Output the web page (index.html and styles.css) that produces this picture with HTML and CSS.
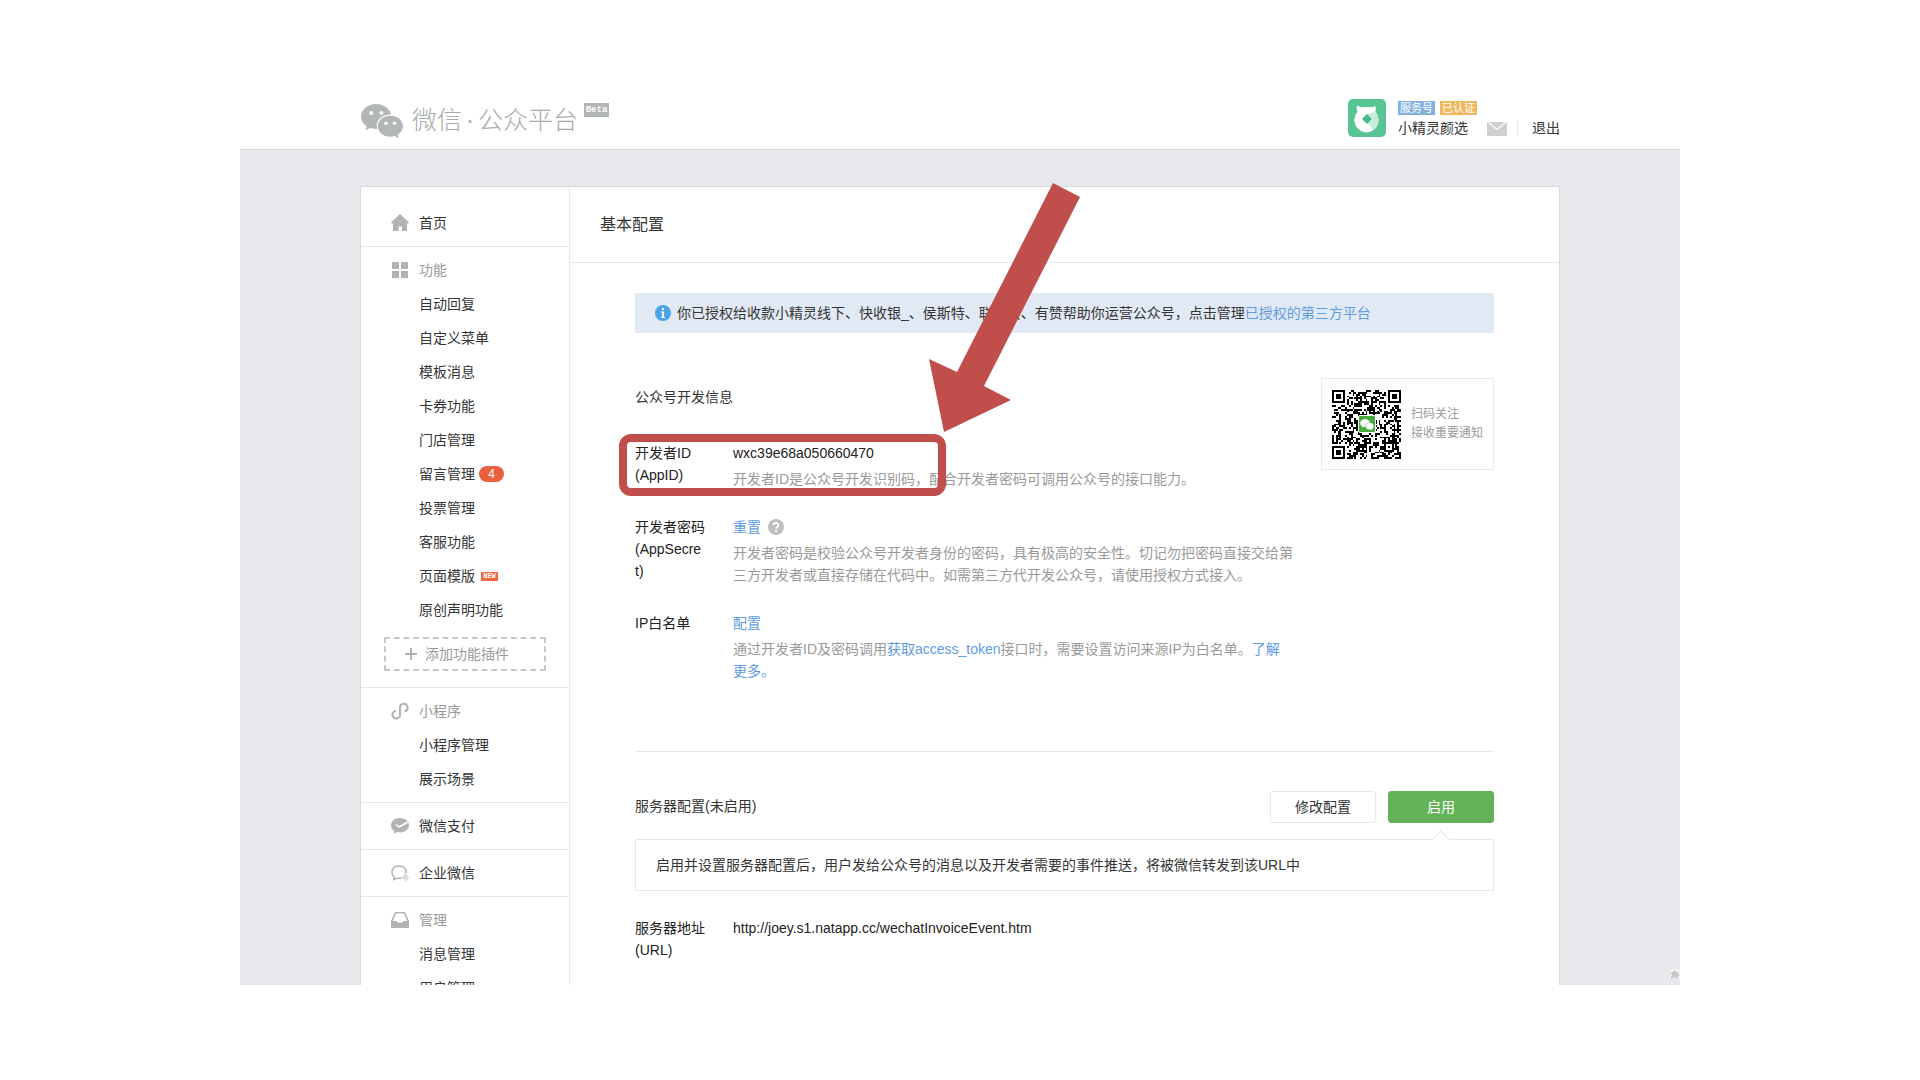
FILE: index.html
```html
<!DOCTYPE html>
<html lang="zh-CN">
<head>
<meta charset="utf-8">
<meta name="viewport" content="width=device-width, initial-scale=1">
<title>微信公众平台 - 基本配置</title>
<link rel="stylesheet" href="styles.css">
</head>
<body>
<svg class="defs" aria-hidden="true">
  <symbol id="wechat" viewBox="0 0 42 34">
    <path d="M15 0C6.700 0 0 5.600 0 12.600c0 4 2.200 7.500 5.600 9.800L4.300 26.600l5-2.500c1.800.5 3.600.8 5.700.8h1.200a11 11 0 0 1-.5-3.200c0-6.200 6-11.200 13.300-11.200h1.200C28.600 4.400 22.400 0 15 0z"/>
    <path d="M42 22.200c0-5.800-5.700-10.500-12.700-10.500s-12.600 4.700-12.600 10.500 5.600 10.500 12.600 10.500c1.600 0 3-.2 4.400-.6l4.300 2.100-1.200-3.600c3.200-1.900 5.200-5 5.200-8.400z"/>
    <g class="eye"><circle cx="10.300" cy="9" r="2"/><circle cx="20.500" cy="9" r="2"/><circle cx="25" cy="19.300" r="1.700"/><circle cx="33.500" cy="19.300" r="1.700"/></g>
  </symbol>
</svg>
<div class="stage">
  <header class="header">
    <div class="wrap header-row">
      <a class="logo" href="#">
        <svg class="logo-mark"><use href="#wechat"/></svg>
        <span class="logo-text">微信<span class="dot">·</span>公众平台</span>
        <span class="beta">Beta</span>
      </a>
      <div class="account">
        <svg class="avatar" viewBox="0 0 38 38">
          <rect width="38" height="38" rx="5" fill="#58c594"/>
          <path d="M9 6.500c3 1.800 5.500 2.200 7 1.500h6c2 .6 4.500 0 5-1.500 1.200 2.500.8 4.500.3 6A12 12.500 0 1 1 9.500 12.500C8.500 10.500 8.500 8.500 9 6.500z" fill="#fff"/>
          <path d="M27 13c5 5 5 13-1 17.500L19 24.500l6-4.500-6-5z" fill="#c6ecdb"/>
          <path d="M19 15l5 5-5 5-5-5z" fill="#46b889"/>
        </svg>
        <div class="who">
          <div class="tags"><span class="tag tag-blue">服务号</span><span class="tag tag-gold">已认证</span></div>
          <div class="who-row">
            <a href="#">小精灵颜选</a>
            <svg class="mail" viewBox="0 0 20 14"><rect width="20" height="14" fill="#cfcfcf"/><path d="M1 0l9 7.500L19 0" fill="none" stroke="#fff" stroke-width="1.200"/></svg>
            <a class="exit" href="#">退出</a>
          </div>
        </div>
      </div>
    </div>
  </header>

  <div class="wrap panel">
    <nav class="side">
      <div class="group first">
        <a class="item head link" href="#"><svg class="ico" viewBox="0 0 18 18"><path d="M9 0l9 8.500-1 1h-1V17h-5v-4.500H7.500V17H2V9.500H1l-1-1z"/></svg>首页</a>
      </div>
      <div class="group">
        <div class="item head"><svg class="ico" viewBox="0 0 18 18"><path d="M1 1h7v7H1zM10 1h7v7h-7zM1 10h7v7H1zM10 10h7v7h-7z"/></svg>功能</div>
        <a class="item" href="#">自动回复</a>
        <a class="item" href="#">自定义菜单</a>
        <a class="item" href="#">模板消息</a>
        <a class="item" href="#">卡券功能</a>
        <a class="item" href="#">门店管理</a>
        <a class="item" href="#">留言管理<span class="count">4</span></a>
        <a class="item" href="#">投票管理</a>
        <a class="item" href="#">客服功能</a>
        <a class="item" href="#">页面模版<span class="new">NEW</span></a>
        <a class="item" href="#">原创声明功能</a>
        <button class="add" type="button"><svg viewBox="0 0 12 12"><path d="M6 0v12M0 6h12"/></svg>添加功能插件</button>
      </div>
      <div class="group">
        <div class="item head"><svg class="ico line" viewBox="0 0 18 18"><path d="M5 9A3.800 3.800 0 1 0 9 13V5.500A3.800 3.800 0 1 1 13.500 9.300"/></svg>小程序</div>
        <a class="item" href="#">小程序管理</a>
        <a class="item" href="#">展示场景</a>
      </div>
      <div class="group">
        <a class="item head link" href="#"><svg class="ico" viewBox="0 0 18 18"><path d="M9 1c5 0 9 3.200 9 7.200s-4 7.200-9 7.200c-1 0-2-.1-2.900-.4L3.300 17v-3C1.300 12.700 0 10.600 0 8.200 0 4.200 4 1 9 1z"/><path d="M5 7.500l3 2.500 9-5" fill="none" stroke="#fff" stroke-width="1.500"/></svg>微信支付</a>
      </div>
      <div class="group">
        <a class="item head link" href="#"><svg class="ico thin" viewBox="0 0 18 18"><path d="M10.500 14a8 8 0 0 1-4.500.1L3 15.500v-2.800C-.8 9 .8 2 8 2c6 0 8 4.500 6.500 7.500"/><path d="M14.500 10l1.300 1.500-1.300 1.500-1.300-1.500zM16.300 12.200l1.300 1.300-1.300 1.300-1.300-1.300zM14.500 14.200l1.300 1.300-1.300 1.300-1.300-1.300zM12.600 12.200l1.300 1.300-1.300 1.300-1.300-1.300z" stroke-width=".8"/></svg>企业微信</a>
      </div>
      <div class="group">
        <div class="item head"><svg class="ico" viewBox="0 0 18 18"><path fill-rule="evenodd" d="M4 1h10l4 9v7H0v-7zM5 2.500L1.800 10H6v1.500h6V10h4.200L13 2.500z"/></svg>管理</div>
        <a class="item" href="#">消息管理</a>
        <a class="item" href="#">用户管理</a>
      </div>
    </nav>

    <main class="main">
      <h1>基本配置</h1>
      <div class="body">
        <p class="notice"><svg viewBox="0 0 16 16"><circle cx="8" cy="8" r="8" fill="#48a6e8"/><path d="M7 3h2v2H7zM6 6.500h3V12h1v1H6v-1h1V7.500H6z" fill="#fff"/></svg><span>你已授权给收款小精灵线下、快收银_、侯斯特、联联云、有赞帮助你运营公众号，点击管理<a href="#">已授权的第三方平台</a></span></p>

        <section class="dev">
          <div class="dev-info">
            <h2>公众号开发信息</h2>
            <dl>
              <div class="row"><dt>开发者ID<br>(AppID)</dt><dd><p class="val">wxc39e68a050660470</p><p class="desc">开发者ID是公众号开发识别码，配合开发者密码可调用公众号的接口能力。</p></dd></div>
              <div class="row"><dt>开发者密码<br>(AppSecret)</dt><dd><p class="val"><a href="#">重置</a><svg class="help" viewBox="0 0 16 16"><circle cx="8" cy="8" r="8" fill="#bfbfbf"/><path d="M5.500 6.300C5.500 3.200 10.500 3.200 10.500 6c0 1.800-2.400 1.700-2.400 3.800M8.100 11v2" fill="none" stroke="#fff" stroke-width="1.800"/></svg></p><p class="desc">开发者密码是校验公众号开发者身份的密码，具有极高的安全性。切记勿把密码直接交给第三方开发者或直接存储在代码中。如需第三方代开发公众号，请使用授权方式接入。</p></dd></div>
              <div class="row"><dt>IP白名单</dt><dd><p class="val"><a href="#">配置</a></p><p class="desc">通过开发者ID及密码调用<a href="#">获取access_token</a>接口时，需要设置访问来源IP为白名单。<a href="#">了解<br>更多。</a></p></dd></div>
            </dl>
          </div>
          <aside class="qr">
            <div class="qr-code"><svg id="qr" viewBox="0 0 37 37" shape-rendering="crispEdges"></svg><span class="qr-logo"><svg><use href="#wechat"/></svg></span></div>
            <p>扫码关注<br>接收重要通知</p>
          </aside>
        </section>

        <section class="server">
          <div class="server-head">
            <h2>服务器配置(未启用)</h2>
            <button class="btn" type="button">修改配置</button>
            <button class="btn primary" type="button">启用</button>
          </div>
          <p class="tip">启用并设置服务器配置后，用户发给公众号的消息以及开发者需要的事件推送，将被微信转发到该URL中</p>
          <dl>
            <div class="row"><dt>服务器地址<br>(URL)</dt><dd><p class="val">http://joey.s1.natapp.cc/wechatInvoiceEvent.htm</p></dd></div>
          </dl>
        </section>
      </div>
    </main>
    <div class="mark-box"></div>
    <svg class="mark-arrow" viewBox="0 0 151 249"><path d="M124 0L151 14 55 203 82 217 15 249 0 176 28 189z"/></svg>
  </div>
  <svg class="plugin" viewBox="0 0 10 10"><rect width="10" height="10" fill="#f2f2f2"/><path d="M1 3h2.500C2.500.5 6 .5 5.500 3H8v2c2-.5 2 2.500 0 2v2.500H5.500C6 7.500 3 7.500 3.500 9.500H1V7c1.500.3 1.500-2 0-1.600z" fill="#c8c8c8"/></svg>
</div>
<script src="qr.js"></script>
</body>
</html>
```
FILE: styles.css
```css
* { box-sizing: border-box; margin: 0; padding: 0; }

body {
  background: #fff;
  color: #353535;
  font: 14px/22px "Liberation Sans", "Noto Sans CJK SC", sans-serif;
}

a { color: inherit; text-decoration: none; }
button { font: inherit; cursor: pointer; }
h1, h2 { font-weight: 400; }
.defs { position: absolute; width: 0; height: 0; }
.eye { fill: #fff; }

.stage {
  position: relative;
  width: 75%;
  height: calc(100vh - 95px);
  margin: 0 auto;
  overflow: hidden;
  background: #e7e8eb;
}

.wrap { width: calc(100% - 240px); max-width: 1200px; margin: 0 auto; }

.header { background: #fff; border-bottom: 1px solid #d9dadc; padding: 99px 0 8px; }
.header-row { display: flex; justify-content: space-between; }

.logo { display: flex; color: #a6abab; }
.logo-mark { width: 42px; height: 34px; margin: 5px 9px 0 1px; fill: #b2b6b6; }
.logo-text { display: flex; font-size: 25px; line-height: 42px; font-weight: 300; }
.dot { width: 16px; text-align: center; }
.beta {
  align-self: flex-start;
  margin: 4px 0 0 6px;
  width: 25px;
  background: #b2b6b6;
  color: #fff;
  font: bold 9px/14px "Liberation Mono", monospace;
  text-align: center;
}

.account { display: flex; gap: 12px; }
.avatar { width: 38px; height: 38px; }
.tags { display: flex; gap: 5px; padding-top: 2px; }
.tag { width: 37px; height: 14px; font-size: 11px; line-height: 14px; color: #fff; text-align: center; }
.tag-blue { background: #82b2e0; }
.tag-gold { background: #f0b95e; }
.who-row { display: flex; align-items: center; line-height: 26px; }
.mail { width: 20px; height: 14px; margin: 2px 10px 0 19px; }
.exit { border-left: 1px solid #e7e8eb; padding-left: 14px; line-height: 16px; }

.panel {
  position: relative;
  display: flex;
  margin-top: 36px;
  min-height: 900px;
  background: #fff;
  border: 1px solid #d9dadc;
}

.side { width: 209px; flex: none; border-right: 1px solid #e7e8eb; }
.group { border-top: 1px solid #e7e8eb; padding: 6px 0; }
.first { border-top: 0; padding-top: 19px; }
.item { display: flex; align-items: center; height: 34px; padding-left: 58px; }
.head { padding-left: 30px; color: #9a9a9a; }
.link { color: #353535; }
.ico { width: 18px; height: 18px; margin-right: 10px; fill: #b2b2b2; }
.line { fill: none; stroke: #b2b2b2; stroke-width: 2; }
.thin { fill: none; stroke: #b2b2b2; stroke-width: 1.5; }
.count { width: 25px; margin-left: 4px; border-radius: 8px; background: #e9603c; color: #fff; font-size: 12px; line-height: 16px; text-align: center; }
.new { width: 17px; margin-left: 6px; background: #ee6a42; color: #fff; font: bold 7px/9px "Liberation Mono", monospace; text-align: center; }
.add {
  display: flex;
  align-items: center;
  width: 162px;
  height: 34px;
  margin: 10px 0 10px 23px;
  padding-left: 19px;
  border: 2px dashed #c9c9c9;
  background: none;
  color: #9a9a9a;
}
.add svg { width: 12px; height: 12px; margin-right: 8px; stroke: #b2b2b2; stroke-width: 2; }

.main { flex: 1; min-width: 0; }
h1 { padding: 26px 30px; font-size: 16px; line-height: 23px; border-bottom: 1px solid #e7e8eb; }
.body { padding: 30px 65px; }
.body a { color: #5e9ce2; }
.notice { display: flex; align-items: center; gap: 6px; height: 40px; padding: 0 20px; background: #e1e9f4; }
.notice svg { width: 16px; height: 16px; }

h2 { font-size: 14px; line-height: 22px; }
.dev { display: flex; align-items: flex-start; justify-content: space-between; margin-top: 45px; }
.dev h2 { margin: 8px 0 34px; }
.row { display: flex; margin-bottom: 26px; }
dt { width: 70px; margin-right: 28px; flex: none; color: #222; overflow-wrap: anywhere; }
dd { width: 562px; color: #222; }
.val { display: flex; align-items: center; }
.desc { margin-top: 4px; color: #9a9a9a; }
.help { width: 16px; height: 16px; margin-left: 7px; }

.qr { display: flex; align-items: center; gap: 10px; width: 173px; height: 92px; padding-left: 10px; border: 1px solid #e7e8eb; color: #9a9a9a; font-size: 12px; line-height: 19px; white-space: nowrap; }
.qr-code { display: grid; place-items: center; }
.qr-code > * { grid-area: 1 / 1; }
#qr { width: 69px; height: 69px; }
.qr-logo { display: grid; place-items: center; width: 18px; height: 18px; background: #48a93f; border: 1px solid #fff; border-radius: 2px; }
.qr-logo svg { width: 14px; height: 11px; fill: #fff; }

.server { margin-top: 43px; border-top: 1px solid #e7e8eb; padding-top: 39px; }
.server-head { display: flex; align-items: flex-start; gap: 12px; }
.server-head h2 { flex: 1; padding-top: 4px; }
.btn { width: 106px; height: 32px; border: 1px solid #e7e8eb; border-radius: 3px; background: #fff; color: #353535; }
.primary { background: #64b258; border-color: #64b258; color: #fff; }
.tip { position: relative; margin: 16px 0 26px; padding: 14px 20px; border: 1px solid #e7e8eb; }
.tip::before {
  content: "";
  position: absolute;
  top: -7px;
  right: 46px;
  width: 12px;
  height: 12px;
  background: #fff;
  border: solid #e7e8eb;
  border-width: 1px 0 0 1px;
  transform: rotate(45deg);
}

.mark-box { position: absolute; left: 258px; top: 247px; width: 327px; height: 62px; border: 8px solid #c04f4c; border-radius: 12px; }
.mark-arrow { position: absolute; left: 568px; top: -4px; width: 151px; height: 249px; fill: #c04f4c; }
.plugin { position: absolute; right: 0; bottom: 6px; width: 10px; height: 10px; }
```
FILE: qr.js
```js
// Fills the 37x37 code: three finder squares, one alignment square, data modules elsewhere.
const size = 37;
const ring = (x, y, cx, cy, r) => Math.max(Math.abs(x - cx), Math.abs(y - cy)) <= r
  ? Math.max(Math.abs(x - cx), Math.abs(y - cy)) : -1;
let seed = 20170;
const next = () => (seed = (seed * 1103515245 + 12345) % 2147483648) / 2147483648;
let path = '';
for (let y = 0; y < size; y++) {
  for (let x = 0; x < size; x++) {
    let on = next() < 0.52;
    for (const [cx, cy] of [[3, 3], [33, 3], [3, 33]]) {
      const d = ring(x, y, cx, cy, 4);
      if (d >= 0) on = d === 3 || d <= 1;
    }
    const a = ring(x, y, 30, 30, 2);
    if (a >= 0) on = a !== 1;
    if (on) path += `M${x} ${y}h1v1h-1z`;
  }
}
document.getElementById('qr').innerHTML = `<path d="${path}"/>`;
```
